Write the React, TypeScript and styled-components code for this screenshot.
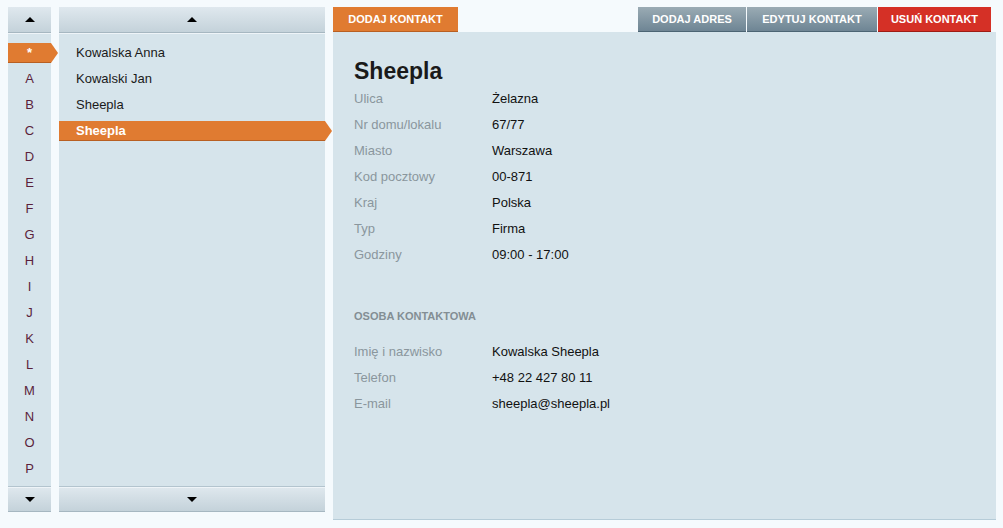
import React from "react";
import styled, { createGlobalStyle, css } from "styled-components";

const Global = createGlobalStyle`
  html, body { margin: 0; padding: 0; background: #f5fafd; }
  body { font-family: "Liberation Sans", Arial, sans-serif; font-size: 13px; color: #1a1a1a; }
  * { box-sizing: border-box; }
`;

const ORANGE = "#e07b31";

const Page = styled.div`
  display: flex;
  gap: 8px;
  padding: 7px 0 0 8px;
  width: 1003px;
  height: 528px;
`;

const Column = styled.div<{ $w: number }>`
  width: ${(p) => p.$w}px;
  height: 505px;
  display: flex;
  flex-direction: column;
  background: #d6e4eb;
`;

const ScrollBar = styled.div<{ $bottom?: boolean }>`
  height: 26px;
  flex: none;
  display: flex;
  align-items: center;
  justify-content: center;
  background: linear-gradient(#dfe8ee, #c4d2da);
  border-bottom: 1px solid #a6b7c1;
  ${(p) =>
    p.$bottom
      ? css`
          border-top: 1px solid #b3c4ce;
          box-shadow: inset 0 1px 0 #eef4f8;
        `
      : css`
          box-shadow: 0 1px 0 #eef4f8;
        `}
`;

const Tri = styled.span<{ $down?: boolean }>`
  width: 0;
  height: 0;
  border-left: 5px solid transparent;
  border-right: 5px solid transparent;
  ${(p) =>
    p.$down ? `border-top: 5px solid #000;` : `border-bottom: 5px solid #000;`}
`;

const List = styled.div`
  flex: 1;
  padding-top: 10px;
  display: flex;
  flex-direction: column;
  gap: 6px;
`;

const Item = styled.div<{ $active?: boolean; $center?: boolean; $arrow: number }>`
  position: relative;
  height: 20px;
  flex: none;
  display: flex;
  align-items: center;
  justify-content: ${(p) => (p.$center ? "center" : "flex-start")};
  padding-left: ${(p) => (p.$center ? 0 : 17)}px;
  padding-bottom: 1px;
  font-size: 13px;
  color: ${(p) => (p.$center ? "#5b1f3b" : "#1a1a1a")};
  ${(p) =>
    p.$active &&
    css`
      background: ${ORANGE};
      color: #fff;
      font-weight: bold;
      box-shadow: inset 0 -1px 0 #b85f22;
      &::after {
        content: "";
        position: absolute;
        right: -${p.$arrow}px;
        top: 0;
        border-left: ${p.$arrow}px solid ${ORANGE};
        border-top: 10px solid transparent;
        border-bottom: 10px solid transparent;
      }
    `}
`;

const Main = styled.div`
  width: 663px;
  height: 513px;
  display: flex;
  flex-direction: column;
`;

const TabBar = styled.div`
  height: 25px;
  flex: none;
  display: flex;
  gap: 1px;
  padding-right: 5px;
`;

const Tab = styled.div<{ $kind: "orange" | "gray" | "red"; $w: number }>`
  width: ${(p) => p.$w}px;
  height: 25px;
  display: flex;
  align-items: center;
  justify-content: center;
  color: #fff;
  font-weight: bold;
  font-size: 11px;
  text-transform: uppercase;
  ${(p) =>
    p.$kind === "orange"
      ? css`
          background: ${ORANGE};
          border-bottom: 1px solid #b85f22;
          margin-right: auto;
        `
      : p.$kind === "gray"
      ? css`
          background: linear-gradient(#9aabb4, #6e8594);
          border-bottom: 1px solid #4c6473;
        `
      : css`
          background: #d53026;
          border-bottom: 1px solid #9e1c14;
        `}
`;

const Content = styled.div`
  flex: 1;
  background: #d6e4eb;
  border-bottom: 1px solid #b6ccd8;
  padding: 26px 0 0 21px;
`;

const Title = styled.h1`
  margin: 0;
  font-size: 23px;
  font-weight: bold;
  line-height: 27px;
  color: #1a1a1a;
`;

const Rows = styled.div`
  display: grid;
  grid-template-columns: 138px 1fr;
  grid-auto-rows: 26px;
  align-items: center;
`;

const Label = styled.div`
  color: #8a969d;
`;

const Value = styled.div`
  color: #111;
`;

const Section = styled.div`
  margin-top: 36px;
  height: 26px;
  display: flex;
  align-items: center;
  font-size: 11px;
  font-weight: bold;
  color: #838e94;
  text-transform: uppercase;
  margin-bottom: 9px;
`;

const letters = ["*", "A", "B", "C", "D", "E", "F", "G", "H", "I", "J", "K", "L", "M", "N", "O", "P"];
const contacts = [
  { name: "Kowalska Anna" },
  { name: "Kowalski Jan" },
  { name: "Sheepla" },
  { name: "Sheepla", active: true },
];

const address: [string, string][] = [
  ["Ulica", "Żelazna"],
  ["Nr domu/lokalu", "67/77"],
  ["Miasto", "Warszawa"],
  ["Kod pocztowy", "00-871"],
  ["Kraj", "Polska"],
  ["Typ", "Firma"],
  ["Godziny", "09:00 - 17:00"],
];

const person: [string, string][] = [
  ["Imię i nazwisko", "Kowalska Sheepla"],
  ["Telefon", "+48 22 427 80 11"],
  ["E-mail", "sheepla@sheepla.pl"],
];

export default function App() {
  return (
    <>
      <Global />
      <Page>
        <Column $w={43}>
          <ScrollBar>
            <Tri />
          </ScrollBar>
          <List>
            {letters.map((l, i) => (
              <Item key={l} $center $active={i === 0} $arrow={7}>
                {l}
              </Item>
            ))}
          </List>
          <ScrollBar $bottom>
            <Tri $down />
          </ScrollBar>
        </Column>
        <Column $w={266}>
          <ScrollBar>
            <Tri />
          </ScrollBar>
          <List>
            {contacts.map((c, i) => (
              <Item key={i} $active={c.active} $arrow={7}>
                {c.name}
              </Item>
            ))}
          </List>
          <ScrollBar $bottom>
            <Tri $down />
          </ScrollBar>
        </Column>
        <Main>
          <TabBar>
            <Tab $kind="orange" $w={125}>Dodaj kontakt</Tab>
            <Tab $kind="gray" $w={108}>Dodaj adres</Tab>
            <Tab $kind="gray" $w={130}>Edytuj kontakt</Tab>
            <Tab $kind="red" $w={113}>Usuń kontakt</Tab>
          </TabBar>
          <Content>
            <Title>Sheepla</Title>
            <Rows>
              {address.map(([k, v]) => (
                <React.Fragment key={k}>
                  <Label>{k}</Label>
                  <Value>{v}</Value>
                </React.Fragment>
              ))}
            </Rows>
            <Section>Osoba kontaktowa</Section>
            <Rows>
              {person.map(([k, v]) => (
                <React.Fragment key={k}>
                  <Label>{k}</Label>
                  <Value>{v}</Value>
                </React.Fragment>
              ))}
            </Rows>
          </Content>
        </Main>
      </Page>
    </>
  );
}
